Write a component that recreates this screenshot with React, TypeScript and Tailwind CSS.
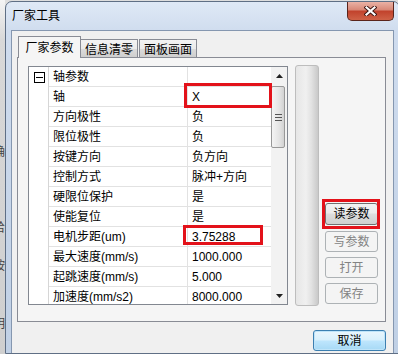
import React from "react";

const rows: [string, string][] = [
  ["轴", "X"],
  ["方向极性", "负"],
  ["限位极性", "负"],
  ["按键方向", "负方向"],
  ["控制方式", "脉冲+方向"],
  ["硬限位保护", "是"],
  ["使能复位", "是"],
  ["电机步距(um)", "3.75288"],
  ["最大速度(mm/s)", "1000.000"],
  ["起跳速度(mm/s)", "5.000"],
  ["加速度(mm/s2)", "8000.000"],
];

function CloseButton() {
  return (
    <div className="w-[47px] h-[19px] rounded-b-[5px] border border-t-0 border-[#5a241b] bg-[linear-gradient(#eab2a5,#d98a79_42%,#c2432d_52%,#cf6247)] flex items-center justify-center">
      <svg width="13" height="10" viewBox="0 0 13 10">
        <path d="M2.5 1.5 L10.5 8.5 M10.5 1.5 L2.5 8.5" stroke="#3a1410" strokeWidth="4" strokeLinecap="square" />
        <path d="M2.5 1.5 L10.5 8.5 M10.5 1.5 L2.5 8.5" stroke="#ffffff" strokeWidth="2.2" strokeLinecap="square" />
      </svg>
    </div>
  );
}

function ScrollBar() {
  return (
    <div className="w-[16px] shrink-0 flex flex-col bg-[#f2f2f2]">
      <div className="h-[17px] flex items-center justify-center">
        <svg width="7" height="4" viewBox="0 0 7 4">
          <polygon points="3.5,0 7,4 0,4" fill="#222" />
        </svg>
      </div>
      <div className="mt-[2px] w-[14px] h-[62px] rounded-[2px] border border-[#989898] bg-[linear-gradient(90deg,#f4f4f4,#e4e4e4_60%,#d2d2d2)] flex flex-col items-center justify-center gap-[2px]">
        <div className="w-[7px] h-px bg-[#555]" />
        <div className="w-[7px] h-px bg-[#555]" />
        <div className="w-[7px] h-px bg-[#555]" />
      </div>
      <div className="flex-1" />
      <div className="h-[17px] flex items-center justify-center">
        <svg width="7" height="4" viewBox="0 0 7 4">
          <polygon points="0,0 7,0 3.5,4" fill="#222" />
        </svg>
      </div>
    </div>
  );
}

function PropertyGrid() {
  return (
    <div className="w-[260px] h-[239px] shrink-0 border border-[#828790] bg-white flex overflow-hidden">
      <div className="flex-1 flex flex-col overflow-hidden">
        <div className="flex h-[20px] shrink-0">
          <div className="w-[20px] shrink-0 border-r border-[#d6d6d6] pl-[5px] pt-[5px]">
            <div className="w-[11px] h-[11px] border border-black flex items-center justify-center">
              <div className="w-[7px] h-px bg-black" />
            </div>
          </div>
          <div className="w-[139px] shrink-0 border-r border-b border-[#e2e2e2] pl-[4px] leading-[21px] overflow-hidden">轴参数</div>
          <div className="flex-1 border-b border-[#e2e2e2]" />
        </div>
        {rows.map(([name, value]) => (
          <div key={name} className="flex h-[20px] shrink-0">
            <div className="w-[20px] shrink-0 border-r border-[#d6d6d6]" />
            <div className="w-[139px] shrink-0 border-r border-b border-[#e2e2e2] pl-[4px] leading-[21px] whitespace-nowrap overflow-hidden">
              {name}
            </div>
            <div className="flex-1 border-b border-[#e2e2e2] pl-[4px] leading-[21px] whitespace-nowrap overflow-hidden">
              {value}
            </div>
          </div>
        ))}
        <div className="flex flex-1">
          <div className="w-[20px] shrink-0 border-r border-[#d6d6d6]" />
        </div>
      </div>
      <ScrollBar />
    </div>
  );
}

const enabledBtn =
  "w-full rounded-[3px] border border-[#707070] bg-[linear-gradient(#f2f2f2,#ebebeb_45%,#dddddd_50%,#cfcfcf)] flex items-center justify-center leading-none text-black";
const disabledBtn =
  "w-full h-[21px] rounded-[3px] border border-[#adb2b5] bg-[#f4f4f4] flex items-center justify-center leading-none text-[#838383]";

export default function App() {
  return (
    <div className="relative w-[398px] h-[354px] overflow-hidden bg-[#dedede] flex font-['Liberation_Sans','Noto_Sans_CJK_SC',sans-serif] text-[12px] text-black">
      {/* window behind */}
      <div className="w-[5px] shrink-0 flex flex-col items-end overflow-hidden text-[#444] bg-[linear-gradient(#f4f4f4,#d8d8d8_40px,#cfcfcf)]">
        <div className="mt-[144px] whitespace-nowrap leading-[16px]">确</div>
        <div className="mt-[60px] whitespace-nowrap leading-[16px]">给</div>
        <div className="mt-[22px] whitespace-nowrap leading-[16px]">按</div>
        <div className="mt-[42px] whitespace-nowrap leading-[16px]">明</div>
      </div>

      {/* dialog window */}
      <div className="w-[395px] shrink-0 mt-px flex flex-col rounded-t-[7px] border border-[#5f6f85] bg-[linear-gradient(#dfe9f6,#cfdcee_30px,#c0d0e5)]">
        <div className="h-[28px] shrink-0 flex items-start justify-between pl-[6px] pr-[5px]">
          <span className="mt-[6px] leading-[16px]">厂家工具</span>
          <CloseButton />
        </div>

        <div className="flex-1 ml-[5px] w-[383px] border border-b-0 border-[#8597b0] bg-[#f0f0f0] pl-[5px] pt-[5px]">
          {/* tabs */}
          <div className="relative z-10 h-[21px] flex items-end pl-px">
            <div className="w-[63px] h-[22px] -mb-px border border-b-0 border-[#898c95] bg-[#f5f5f5] flex justify-center pt-[3px] leading-[16px]">
              厂家参数
            </div>
            <div className="w-[57px] h-[18px] border border-l-0 border-b-0 border-[#898c95] bg-[linear-gradient(#f3f3f3,#ebebeb_50%,#dcdcdc_50%,#cfcfcf)] flex justify-center pt-[2px] leading-[16px]">
              信息清零
            </div>
            <div className="ml-px w-[58px] h-[18px] border border-b-0 border-[#898c95] bg-[linear-gradient(#f3f3f3,#ebebeb_50%,#dcdcdc_50%,#cfcfcf)] flex justify-center pt-[2px] leading-[16px]">
              面板画面
            </div>
          </div>

          {/* tab page */}
          <div className="w-[369px] h-[265px] border border-[#898c95] bg-[#f5f5f5] pl-[10px] pt-[8px] flex items-start">
            <PropertyGrid />
            <div className="ml-[7px] -mt-px w-[24px] h-[241px] shrink-0 rounded-[3px] border border-[#bdbdbd] bg-[linear-gradient(90deg,#e6e6e6,#f0f0f0_45%,#e2e2e2_70%,#c9c9c9)]" />
            <div className="ml-[6px] w-[53px] shrink-0 mt-[137px] flex flex-col">
              <div className={enabledBtn + " h-[22px]"}>读参数</div>
              <div className={disabledBtn + " mt-[6px]"}>写参数</div>
              <div className={disabledBtn + " mt-[5px]"}>打开</div>
              <div className={disabledBtn + " mt-[5px]"}>保存</div>
            </div>
          </div>

          <div className="w-[369px] mt-[8px] flex justify-end">
            <div className="w-[73px] h-[21px] rounded-[3px] border border-[#3c7fb1] bg-[linear-gradient(#eaf6fd,#d9f0fc_48%,#bee6fd_52%,#a7d9f5)] shadow-[inset_0_0_0_1px_#bfe4f9] flex items-center justify-center leading-none">
              取消
            </div>
          </div>
        </div>
      </div>

      {/* red annotation boxes */}
      <div className="absolute left-[184px] top-[83px] w-[88px] h-[25px] border-[3px] border-[#e3121a] pointer-events-none" />
      <div className="absolute left-[183px] top-[225px] w-[80px] h-[20px] border-[3px] border-[#e3121a] pointer-events-none" />
      <div className="absolute left-[322px] top-[199px] w-[58px] h-[30px] border-[3px] border-[#e3121a] pointer-events-none" />
    </div>
  );
}
